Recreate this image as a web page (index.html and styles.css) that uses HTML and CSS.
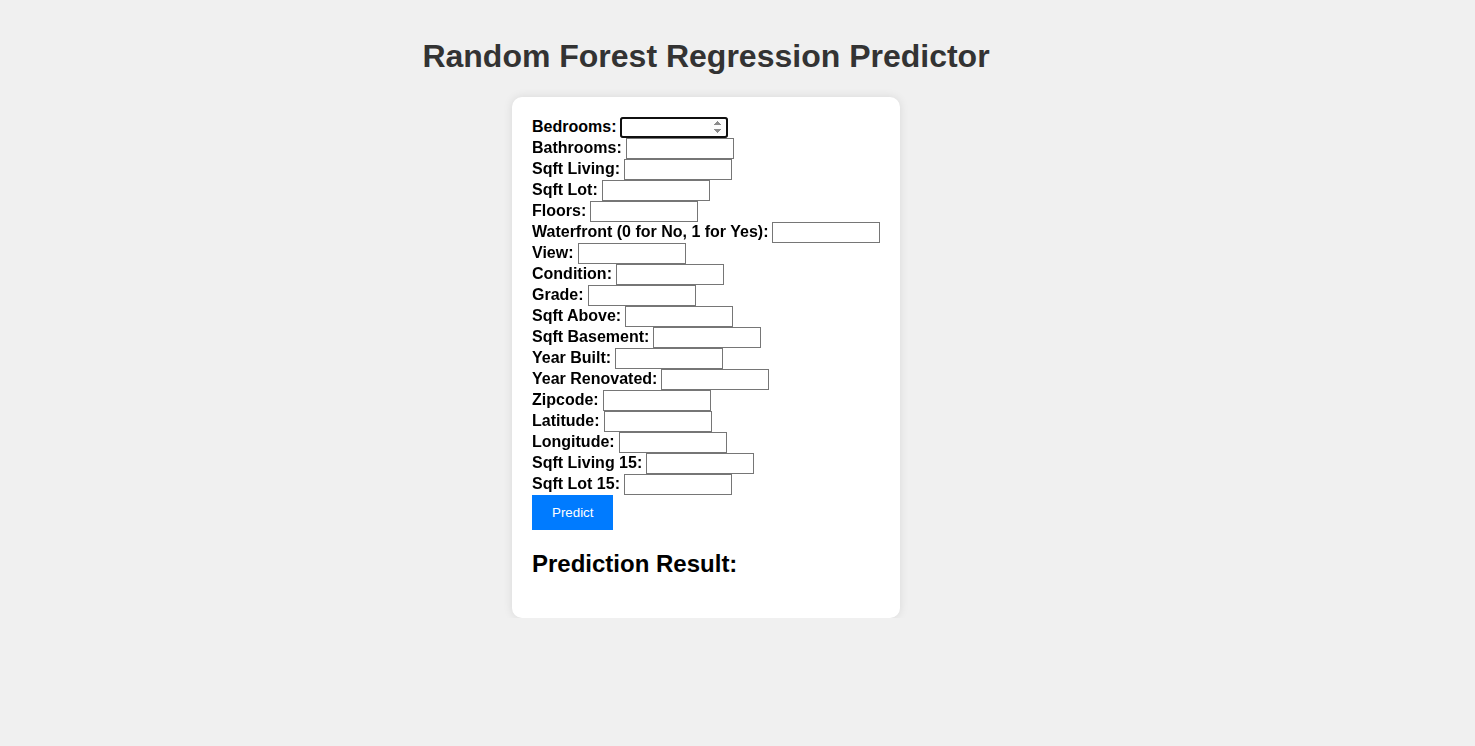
FILE: index.html
```html
<!DOCTYPE html>
<html lang="en">
<head>
<meta charset="utf-8">
<title>Random Forest Regression Predictor</title>
<link rel="stylesheet" href="styles.css">
</head>
<body>
<div class="page">
  <h1 class="title">Random Forest Regression Predictor</h1>
  <form class="card" onsubmit="return false;">
    <div class="row"><label for="f1">Bedrooms:</label><input id="f1" type="number" autofocus></div>
    <div class="row"><label for="f2">Bathrooms:</label><input id="f2" type="number"></div>
    <div class="row"><label for="f3">Sqft Living:</label><input id="f3" type="number"></div>
    <div class="row"><label for="f4">Sqft Lot:</label><input id="f4" type="number"></div>
    <div class="row"><label for="f5">Floors:</label><input id="f5" type="number"></div>
    <div class="row"><label for="f6">Waterfront (0 for No, 1 for Yes):</label><input id="f6" type="number"></div>
    <div class="row"><label for="f7">View:</label><input id="f7" type="number"></div>
    <div class="row"><label for="f8">Condition:</label><input id="f8" type="number"></div>
    <div class="row"><label for="f9">Grade:</label><input id="f9" type="number"></div>
    <div class="row"><label for="f10">Sqft Above:</label><input id="f10" type="number"></div>
    <div class="row"><label for="f11">Sqft Basement:</label><input id="f11" type="number"></div>
    <div class="row"><label for="f12">Year Built:</label><input id="f12" type="number"></div>
    <div class="row"><label for="f13">Year Renovated:</label><input id="f13" type="number"></div>
    <div class="row"><label for="f14">Zipcode:</label><input id="f14" type="number"></div>
    <div class="row"><label for="f15">Latitude:</label><input id="f15" type="number"></div>
    <div class="row"><label for="f16">Longitude:</label><input id="f16" type="number"></div>
    <div class="row"><label for="f17">Sqft Living 15:</label><input id="f17" type="number"></div>
    <div class="row"><label for="f18">Sqft Lot 15:</label><input id="f18" type="number"></div>
    <button class="btn" type="submit">Predict</button>
    <h2 class="result">Prediction Result:</h2>
  </form>
</div>
</body>
</html>
```

FILE: styles.css
```css
html, body {
  margin: 0;
  padding: 0;
  background: #f0f0f0;
  font-family: "Liberation Sans", Arial, sans-serif;
}

.page {
  width: 1412px;
  padding-top: 17px;
  display: flex;
  flex-direction: column;
  align-items: center;
}

.title {
  font-size: 32px;
  font-weight: bold;
  color: #333;
  margin: 21.44px 0;
  line-height: 37px;
}

.card {
  width: 348px;
  padding: 20px;
  background: #fff;
  border-radius: 10px;
  box-shadow: 0 0 10px rgba(0, 0, 0, 0.1);
}

.row {
  display: flex;
  align-items: center;
  gap: 4px;
  height: 21px;
}

.row label {
  font-size: 16px;
  font-weight: bold;
  color: #000;
  white-space: nowrap;
}

.row input {
  box-sizing: border-box;
  width: 108px;
  height: 21px;
  margin: 0;
  padding: 1px 2px;
  border: 1px solid #767676;
  border-radius: 0;
  font-family: "Liberation Sans", Arial, sans-serif;
  font-size: 13.33px;
  background: #fff;
}

.row input:focus {
  outline: 2px solid #101010;
  outline-offset: -2px;
  border-radius: 3px;
}

.btn {
  display: block;
  margin: 0;
  padding: 10px 20px;
  height: 35px;
  border: none;
  background: #007bff;
  color: #fff;
  font-family: "Liberation Sans", Arial, sans-serif;
  font-size: 13.33px;
  cursor: pointer;
}

.result {
  font-size: 24px;
  font-weight: bold;
  margin: 19.92px 0 20.5px;
  line-height: 27.6px;
  color: #000;
}
```
